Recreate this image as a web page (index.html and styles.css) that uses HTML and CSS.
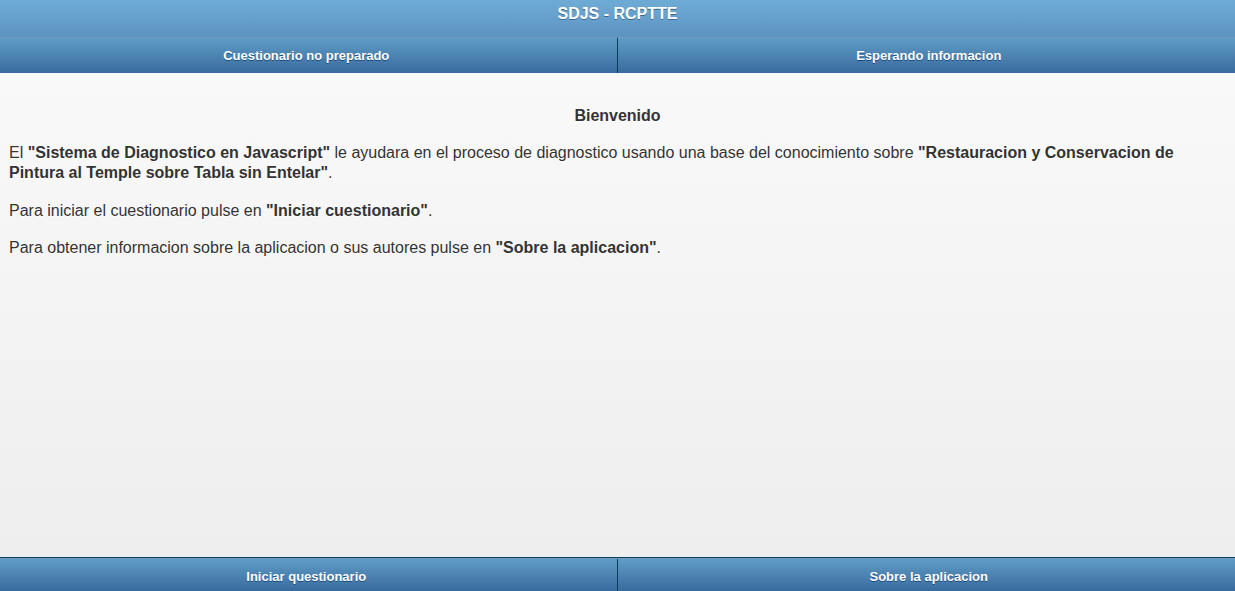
FILE: index.html
```
<!DOCTYPE html>
<html lang="es">
<head>
<meta charset="utf-8">
<title>SDJS - RCPTTE</title>
<link rel="stylesheet" href="styles.css">
</head>
<body>
<div class="page">
  <header class="header">
    <h1 class="title">SDJS - RCPTTE</h1>
    <nav class="navbar">
      <a class="nav-btn" href="#">Cuestionario no preparado</a>
      <a class="nav-btn" href="#">Esperando informacion</a>
    </nav>
  </header>
  <main class="content">
    <p class="welcome">Bienvenido</p>
    <p>El <b>"Sistema de Diagnostico en Javascript"</b> le ayudara en el proceso de diagnostico usando una base del conocimiento sobre <b>"Restauracion y Conservacion de Pintura al Temple sobre Tabla sin Entelar"</b>.</p>
    <p class="after-intro">Para iniciar el cuestionario pulse en <b>"Iniciar cuestionario"</b>.</p>
    <p>Para obtener informacion sobre la aplicacion o sus autores pulse en <b>"Sobre la aplicacion"</b>.</p>
  </main>
  <footer class="footer">
    <nav class="navbar footer-nav">
      <a class="nav-btn" href="#">Iniciar questionario</a>
      <a class="nav-btn" href="#">Sobre la aplicacion</a>
    </nav>
  </footer>
</div>
</body>
</html>
```
FILE: styles.css
```
* { box-sizing: border-box; }
html, body { margin: 0; padding: 0; height: 100%; }
body {
  font-family: "Liberation Sans", Arial, Helvetica, sans-serif;
  font-size: 16px;
  color: #333;
  background: #eee;
}
.page {
  display: flex;
  flex-direction: column;
  height: 100vh;
  overflow: hidden;
}
.header {
  background: linear-gradient(#6facd5, #497bae);
  color: #fff;
  flex: none;
}
.title {
  margin: 0;
  padding: 5px 0 14px;
  font-size: 16px;
  line-height: 18px;
  font-weight: bold;
  text-align: center;
  text-shadow: 0 1px 0 #3e6790;
}
.navbar {
  display: flex;
}
.nav-btn {
  flex: 1 1 0;
  height: 36px;
  display: flex;
  align-items: center;
  justify-content: center;
  font-size: 13px;
  font-weight: bold;
  color: #fff;
  text-decoration: none;
  text-shadow: 0 1px 0 #194b7e;
  background: linear-gradient(#5f9cc5, #396b9e);
  border-top: 1px solid rgba(255,255,255,.3);
  padding-right: 4px;
}
.nav-btn + .nav-btn {
  border-left: 1px solid #044062;
  padding-right: 0;
  padding-left: 5px;
}
.content {
  flex: 1 1 auto;
  background: linear-gradient(#f9f9f9, #eee);
  padding: 15px 9px;
  line-height: 20px;
  text-shadow: 0 1px 0 #fff;
  border-top: 1px solid #f6f6f6;
}
.content p {
  margin: 17px 0;
}
.content .after-intro {
  margin-top: 18px;
}
.welcome {
  text-align: center;
  font-weight: bold;
}
.footer {
  flex: none;
  border-top: 1px solid #044062;
}
.footer-nav .nav-btn {
  height: 33px;
  padding-top: 2px;
}
```
